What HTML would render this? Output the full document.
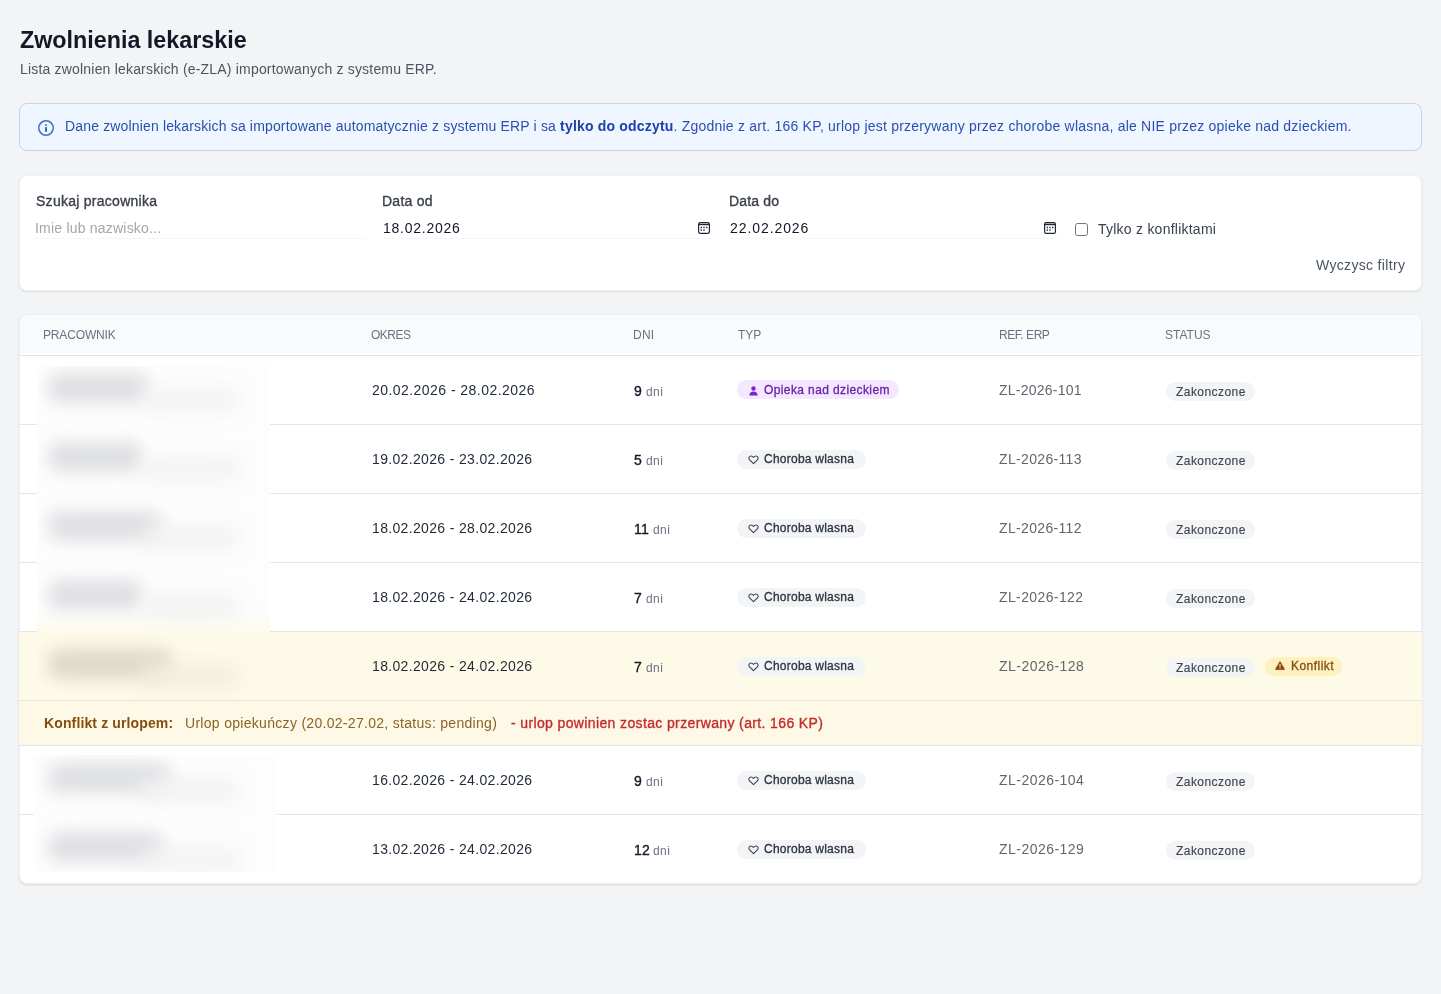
<!DOCTYPE html>
<html><head><meta charset="utf-8"><title>Zwolnienia lekarskie</title>
<style>
html,body{margin:0;padding:0;}
body{width:1441px;height:994px;overflow:hidden;background:#f3f4f6;position:relative;font-family:"Liberation Sans",sans-serif;}
.t{position:absolute;white-space:nowrap;line-height:1;will-change:transform;}
.t b{font-weight:700;}
.ic{position:absolute;display:block;}
.box{position:absolute;box-sizing:border-box;border-radius:8px;}
.info{background:#eff6ff;border:1px solid #c6d5ea;}
.card{background:#fff;border:1px solid #eef0f2;box-shadow:0 1px 3px rgba(0,0,0,0.07),0 1px 2px rgba(0,0,0,0.04);}
.ln{position:absolute;height:1px;background:#f6f6f7;}
.cb{position:absolute;width:13px;height:13px;box-sizing:border-box;border:1px solid #707274;border-radius:2.5px;background:#fff;}
.rl{position:absolute;left:19px;width:1403px;height:1px;background:#e4e5e7;}
.yb{position:absolute;left:19px;width:1403px;background:#fefae8;}
.bd{position:absolute;height:19px;border-radius:10px;}
.blur{position:absolute;overflow:hidden;}
.b1{position:absolute;filter:blur(8px);border-radius:12px;}
.b2{position:absolute;filter:blur(9px);border-radius:12px;}
</style></head><body>
<div class="t" style="left:19.5px;top:29.28px;font-size:23.3px;color:#111827;font-weight:700;letter-spacing:0px;">Zwolnienia lekarskie</div>
<div class="t" style="left:20px;top:62.05px;font-size:14px;color:#4b5563;font-weight:400;letter-spacing:0.19px;">Lista zwolnien lekarskich (e-ZLA) importowanych z systemu ERP.</div>
<div class="box info" style="left:19px;top:103px;width:1403px;height:48px;"></div>
<svg class="ic" style="left:37px;top:119px" width="18" height="18" viewBox="0 0 18 18"><circle cx="9" cy="9" r="7.25" fill="none" stroke="#3d6fcc" stroke-width="1.5"/><rect x="8.1" y="7.9" width="1.8" height="5" rx=".6" fill="#30579f"/><rect x="8.1" y="5.2" width="1.8" height="1.5" rx=".5" fill="#30579f"/></svg>
<div class="t" style="left:64.5px;top:118.75px;font-size:14px;color:#2b4fb0;font-weight:400;letter-spacing:0.19px;"><span style="letter-spacing:0.155px">Dane zwolnien lekarskich sa importowane automatycznie z systemu ERP i sa </span><b style="color:#1e40af">tylko do odczytu</b><span style="letter-spacing:0.215px">. Zgodnie z art. 166 KP, urlop jest przerywany przez chorobe wlasna, ale NIE przez opieke nad dzieckiem.</span></div>
<div class="box card" style="left:19px;top:175px;width:1403px;height:116px;"></div>
<div class="t" style="left:36px;top:193.95px;font-size:14px;color:#3b4049;font-weight:400;letter-spacing:0.27px;-webkit-text-stroke:0.35px #3b4049;">Szukaj pracownika</div>
<div class="t" style="left:35.2px;top:220.65px;font-size:14px;color:#a3a6ab;font-weight:400;letter-spacing:0.21px;">Imie lub nazwisko...</div>
<div class="ln" style="left:36px;top:238px;width:330px;"></div>
<div class="t" style="left:382px;top:194.05px;font-size:14px;color:#3b4049;font-weight:400;letter-spacing:0.25px;-webkit-text-stroke:0.35px #3b4049;">Data od</div>
<div class="t" style="left:382.5px;top:220.95px;font-size:14px;color:#111827;font-weight:400;letter-spacing:0.75px;">18.02.2026</div>
<div class="ln" style="left:383px;top:238px;width:330px;"></div>
<div class="t" style="left:728.5px;top:194.05px;font-size:14px;color:#3b4049;font-weight:400;letter-spacing:0.17px;-webkit-text-stroke:0.35px #3b4049;">Data do</div>
<div class="t" style="left:730px;top:220.95px;font-size:14px;color:#111827;font-weight:400;letter-spacing:0.92px;">22.02.2026</div>
<div class="ln" style="left:730px;top:238px;width:330px;"></div>
<svg class="ic" style="left:698px;top:222px" width="12" height="12" viewBox="0 0 12 12"><rect x="0.6" y="0.6" width="10.8" height="10.8" rx="1.6" fill="none" stroke="#1f2937" stroke-width="1.2"/><rect x="0.6" y="1.8" width="10.8" height="1.4" fill="#1f2937"/><rect x="2.6" y="4.8" width="1.4" height="1.4" fill="#1f2937"/><rect x="5.3" y="4.8" width="1.4" height="1.4" fill="#1f2937"/><rect x="8" y="4.8" width="1.4" height="1.4" fill="#1f2937"/><rect x="2.6" y="7.4" width="1.4" height="1.4" fill="#1f2937"/><rect x="5.3" y="7.4" width="1.4" height="1.4" fill="#1f2937"/></svg>
<svg class="ic" style="left:1044px;top:222px" width="12" height="12" viewBox="0 0 12 12"><rect x="0.6" y="0.6" width="10.8" height="10.8" rx="1.6" fill="none" stroke="#1f2937" stroke-width="1.2"/><rect x="0.6" y="1.8" width="10.8" height="1.4" fill="#1f2937"/><rect x="2.6" y="4.8" width="1.4" height="1.4" fill="#1f2937"/><rect x="5.3" y="4.8" width="1.4" height="1.4" fill="#1f2937"/><rect x="8" y="4.8" width="1.4" height="1.4" fill="#1f2937"/><rect x="2.6" y="7.4" width="1.4" height="1.4" fill="#1f2937"/><rect x="5.3" y="7.4" width="1.4" height="1.4" fill="#1f2937"/></svg>
<div class="cb" style="left:1075px;top:223px;"></div>
<div class="t" style="left:1098px;top:221.75px;font-size:14px;color:#374151;font-weight:400;letter-spacing:0.24px;">Tylko z konfliktami</div>
<div class="t" style="left:1316px;top:258.05px;font-size:14px;color:#4b5563;font-weight:400;letter-spacing:0.33px;">Wyczysc filtry</div>
<div class="box card" style="left:19px;top:314px;width:1403px;height:570px;overflow:hidden"><div style="position:absolute;left:0;top:0;width:1403px;height:38px;background:#f9fafb"></div></div>
<div class="t" style="left:43.2px;top:328.59px;font-size:12px;color:#6b7280;font-weight:400;letter-spacing:-0.15px;">PRACOWNIK</div>
<div class="t" style="left:371.4px;top:328.59px;font-size:12px;color:#6b7280;font-weight:400;letter-spacing:-0.5px;">OKRES</div>
<div class="t" style="left:632.6px;top:328.59px;font-size:12px;color:#6b7280;font-weight:400;letter-spacing:0.25px;">DNI</div>
<div class="t" style="left:738px;top:328.59px;font-size:12px;color:#6b7280;font-weight:400;letter-spacing:0px;">TYP</div>
<div class="t" style="left:998.6px;top:328.59px;font-size:12px;color:#6b7280;font-weight:400;letter-spacing:-0.45px;">REF. ERP</div>
<div class="t" style="left:1165px;top:328.59px;font-size:12px;color:#6b7280;font-weight:400;letter-spacing:0px;">STATUS</div>
<div class="rl" style="top:355px"></div>
<div class="t" style="left:371.7px;top:382.75px;font-size:14px;color:#1f2937;font-weight:400;letter-spacing:0.45px;">20.02.2026 - 28.02.2026</div>
<div class="t" style="left:633.5px;top:383.95px;font-size:14px;color:#111827;font-weight:400;letter-spacing:0.3px;-webkit-text-stroke:0.35px #111827;">9</div>
<div class="t" style="left:646.0px;top:385.64px;font-size:12px;color:#6b7280;font-weight:400;letter-spacing:0.4px;">dni</div>
<div class="bd" style="left:737px;top:380px;width:162px;background:#f3e8ff"></div>
<svg class="ic" style="left:748.5px;top:385.5px" width="9" height="10" viewBox="0 0 9 10"><circle cx="4.5" cy="2.5" r="2.2" fill="#7e22ce"/><path d="M0.3 9.6 C0.5 6.6 2.3 5.6 4.5 5.6 C6.7 5.6 8.5 6.6 8.7 9.6 Z" fill="#7e22ce"/></svg>
<div class="t" style="left:764.2px;top:384.04px;font-size:12px;color:#6b21a8;font-weight:400;letter-spacing:0.39px;-webkit-text-stroke:0.3px #6b21a8;">Opieka nad dzieckiem</div>
<div class="t" style="left:999.2px;top:382.95px;font-size:14px;color:#62666e;font-weight:400;letter-spacing:0.24px;">ZL-2026-101</div>
<div class="bd" style="left:1166px;top:382px;width:89px;background:#f3f4f6"></div>
<div class="t" style="left:1176px;top:385.94px;font-size:12px;color:#3f4652;font-weight:400;letter-spacing:0.44px;-webkit-text-stroke:0.15px #3f4652;">Zakonczone</div>
<div class="rl" style="top:424px"></div>
<div class="t" style="left:371.7px;top:451.75px;font-size:14px;color:#1f2937;font-weight:400;letter-spacing:0.34px;">19.02.2026 - 23.02.2026</div>
<div class="t" style="left:633.5px;top:452.95px;font-size:14px;color:#111827;font-weight:400;letter-spacing:0.3px;-webkit-text-stroke:0.35px #111827;">5</div>
<div class="t" style="left:646.0px;top:454.64px;font-size:12px;color:#6b7280;font-weight:400;letter-spacing:0.4px;">dni</div>
<div class="bd" style="left:737px;top:449.5px;width:129px;background:#f3f4f6"></div>
<svg class="ic" style="left:747.5px;top:454.5px" width="11" height="10" viewBox="0 0 11 10"><path d="M5.5 8.6 L1.6 4.8 C0.6 3.8 0.7 2.2 1.8 1.4 C2.8 0.8 4.3 1.0 5.5 2.4 C6.7 1.0 8.2 0.8 9.2 1.4 C10.3 2.2 10.4 3.8 9.4 4.8 Z" fill="none" stroke="#374151" stroke-width="1.1" stroke-linejoin="round"/></svg>
<div class="t" style="left:764.4px;top:452.84px;font-size:12px;color:#2b3340;font-weight:400;letter-spacing:0.24px;-webkit-text-stroke:0.3px #2b3340;">Choroba wlasna</div>
<div class="t" style="left:999.2px;top:451.95px;font-size:14px;color:#62666e;font-weight:400;letter-spacing:0.34px;">ZL-2026-113</div>
<div class="bd" style="left:1166px;top:451px;width:89px;background:#f3f4f6"></div>
<div class="t" style="left:1176px;top:454.94px;font-size:12px;color:#3f4652;font-weight:400;letter-spacing:0.44px;-webkit-text-stroke:0.15px #3f4652;">Zakonczone</div>
<div class="rl" style="top:493px"></div>
<div class="t" style="left:371.7px;top:520.75px;font-size:14px;color:#1f2937;font-weight:400;letter-spacing:0.34px;">18.02.2026 - 28.02.2026</div>
<div class="t" style="left:633.5px;top:521.95px;font-size:14px;color:#111827;font-weight:400;letter-spacing:0.3px;-webkit-text-stroke:0.35px #111827;">11</div>
<div class="t" style="left:652.5px;top:523.64px;font-size:12px;color:#6b7280;font-weight:400;letter-spacing:0.4px;">dni</div>
<div class="bd" style="left:737px;top:518.5px;width:129px;background:#f3f4f6"></div>
<svg class="ic" style="left:747.5px;top:523.5px" width="11" height="10" viewBox="0 0 11 10"><path d="M5.5 8.6 L1.6 4.8 C0.6 3.8 0.7 2.2 1.8 1.4 C2.8 0.8 4.3 1.0 5.5 2.4 C6.7 1.0 8.2 0.8 9.2 1.4 C10.3 2.2 10.4 3.8 9.4 4.8 Z" fill="none" stroke="#374151" stroke-width="1.1" stroke-linejoin="round"/></svg>
<div class="t" style="left:764.4px;top:521.84px;font-size:12px;color:#2b3340;font-weight:400;letter-spacing:0.24px;-webkit-text-stroke:0.3px #2b3340;">Choroba wlasna</div>
<div class="t" style="left:999.2px;top:520.95px;font-size:14px;color:#62666e;font-weight:400;letter-spacing:0.34px;">ZL-2026-112</div>
<div class="bd" style="left:1166px;top:520px;width:89px;background:#f3f4f6"></div>
<div class="t" style="left:1176px;top:523.94px;font-size:12px;color:#3f4652;font-weight:400;letter-spacing:0.44px;-webkit-text-stroke:0.15px #3f4652;">Zakonczone</div>
<div class="rl" style="top:562px"></div>
<div class="t" style="left:371.7px;top:589.75px;font-size:14px;color:#1f2937;font-weight:400;letter-spacing:0.34px;">18.02.2026 - 24.02.2026</div>
<div class="t" style="left:633.5px;top:590.95px;font-size:14px;color:#111827;font-weight:400;letter-spacing:0.3px;-webkit-text-stroke:0.35px #111827;">7</div>
<div class="t" style="left:646.0px;top:592.64px;font-size:12px;color:#6b7280;font-weight:400;letter-spacing:0.4px;">dni</div>
<div class="bd" style="left:737px;top:587.5px;width:129px;background:#f3f4f6"></div>
<svg class="ic" style="left:747.5px;top:592.5px" width="11" height="10" viewBox="0 0 11 10"><path d="M5.5 8.6 L1.6 4.8 C0.6 3.8 0.7 2.2 1.8 1.4 C2.8 0.8 4.3 1.0 5.5 2.4 C6.7 1.0 8.2 0.8 9.2 1.4 C10.3 2.2 10.4 3.8 9.4 4.8 Z" fill="none" stroke="#374151" stroke-width="1.1" stroke-linejoin="round"/></svg>
<div class="t" style="left:764.4px;top:590.84px;font-size:12px;color:#2b3340;font-weight:400;letter-spacing:0.24px;-webkit-text-stroke:0.3px #2b3340;">Choroba wlasna</div>
<div class="t" style="left:999.2px;top:589.95px;font-size:14px;color:#62666e;font-weight:400;letter-spacing:0.39px;">ZL-2026-122</div>
<div class="bd" style="left:1166px;top:589px;width:89px;background:#f3f4f6"></div>
<div class="t" style="left:1176px;top:592.94px;font-size:12px;color:#3f4652;font-weight:400;letter-spacing:0.44px;-webkit-text-stroke:0.15px #3f4652;">Zakonczone</div>
<div class="rl" style="top:631px"></div>
<div class="yb" style="top:632px;height:68px"></div>
<div class="rl" style="top:700px"></div>
<div class="yb" style="top:701px;height:44px;background:#fef9e7"></div>
<div class="t" style="left:371.7px;top:658.75px;font-size:14px;color:#1f2937;font-weight:400;letter-spacing:0.34px;">18.02.2026 - 24.02.2026</div>
<div class="t" style="left:633.5px;top:659.95px;font-size:14px;color:#111827;font-weight:400;letter-spacing:0.3px;-webkit-text-stroke:0.35px #111827;">7</div>
<div class="t" style="left:646.0px;top:661.64px;font-size:12px;color:#6b7280;font-weight:400;letter-spacing:0.4px;">dni</div>
<div class="bd" style="left:737px;top:656.5px;width:129px;background:#f3f4f6"></div>
<svg class="ic" style="left:747.5px;top:661.5px" width="11" height="10" viewBox="0 0 11 10"><path d="M5.5 8.6 L1.6 4.8 C0.6 3.8 0.7 2.2 1.8 1.4 C2.8 0.8 4.3 1.0 5.5 2.4 C6.7 1.0 8.2 0.8 9.2 1.4 C10.3 2.2 10.4 3.8 9.4 4.8 Z" fill="none" stroke="#374151" stroke-width="1.1" stroke-linejoin="round"/></svg>
<div class="t" style="left:764.4px;top:659.84px;font-size:12px;color:#2b3340;font-weight:400;letter-spacing:0.24px;-webkit-text-stroke:0.3px #2b3340;">Choroba wlasna</div>
<div class="t" style="left:999.2px;top:658.95px;font-size:14px;color:#62666e;font-weight:400;letter-spacing:0.47px;">ZL-2026-128</div>
<div class="bd" style="left:1166px;top:658px;width:89px;background:#f3f4f6"></div>
<div class="t" style="left:1176px;top:661.94px;font-size:12px;color:#3f4652;font-weight:400;letter-spacing:0.44px;-webkit-text-stroke:0.15px #3f4652;">Zakonczone</div>
<div class="bd" style="left:1265px;top:656.5px;width:77px;background:#fdf1c0"></div>
<svg class="ic" style="left:1275px;top:661px" width="10" height="9" viewBox="0 0 10 9"><path d="M5 0.6 L9.5 8.4 L0.5 8.4 Z" fill="#92400e" stroke="#92400e" stroke-width="0.8" stroke-linejoin="round"/><rect x="4.4" y="3.2" width="1.2" height="2.6" fill="#fef3c7"/><rect x="4.4" y="6.5" width="1.2" height="1.1" fill="#fef3c7"/></svg>
<div class="t" style="left:1290.7px;top:659.64px;font-size:12px;color:#854d0e;font-weight:400;letter-spacing:0.47px;-webkit-text-stroke:0.3px #854d0e;">Konflikt</div>
<div class="t" style="left:44px;top:716.05px;font-size:14px;color:#854d0e;font-weight:700;letter-spacing:0.13px;">Konflikt z urlopem:</div>
<div class="t" style="left:185.4px;top:716.05px;font-size:14px;color:#8a6424;font-weight:400;letter-spacing:0.3px;">Urlop opiekuńczy (20.02-27.02, status: pending)</div>
<div class="t" style="left:510.5px;top:716.05px;font-size:14px;color:#c42b2b;font-weight:400;letter-spacing:0.37px;-webkit-text-stroke:0.35px #c42b2b;">- urlop powinien zostac przerwany (art. 166 KP)</div>
<div class="rl" style="top:745px"></div>
<div class="t" style="left:371.7px;top:772.75px;font-size:14px;color:#1f2937;font-weight:400;letter-spacing:0.34px;">16.02.2026 - 24.02.2026</div>
<div class="t" style="left:633.5px;top:773.95px;font-size:14px;color:#111827;font-weight:400;letter-spacing:0.3px;-webkit-text-stroke:0.35px #111827;">9</div>
<div class="t" style="left:646.0px;top:775.64px;font-size:12px;color:#6b7280;font-weight:400;letter-spacing:0.4px;">dni</div>
<div class="bd" style="left:737px;top:770.5px;width:129px;background:#f3f4f6"></div>
<svg class="ic" style="left:747.5px;top:775.5px" width="11" height="10" viewBox="0 0 11 10"><path d="M5.5 8.6 L1.6 4.8 C0.6 3.8 0.7 2.2 1.8 1.4 C2.8 0.8 4.3 1.0 5.5 2.4 C6.7 1.0 8.2 0.8 9.2 1.4 C10.3 2.2 10.4 3.8 9.4 4.8 Z" fill="none" stroke="#374151" stroke-width="1.1" stroke-linejoin="round"/></svg>
<div class="t" style="left:764.4px;top:773.84px;font-size:12px;color:#2b3340;font-weight:400;letter-spacing:0.24px;-webkit-text-stroke:0.3px #2b3340;">Choroba wlasna</div>
<div class="t" style="left:999.2px;top:772.95px;font-size:14px;color:#62666e;font-weight:400;letter-spacing:0.47px;">ZL-2026-104</div>
<div class="bd" style="left:1166px;top:772px;width:89px;background:#f3f4f6"></div>
<div class="t" style="left:1176px;top:775.94px;font-size:12px;color:#3f4652;font-weight:400;letter-spacing:0.44px;-webkit-text-stroke:0.15px #3f4652;">Zakonczone</div>
<div class="rl" style="top:814px"></div>
<div class="t" style="left:371.7px;top:841.75px;font-size:14px;color:#1f2937;font-weight:400;letter-spacing:0.34px;">13.02.2026 - 24.02.2026</div>
<div class="t" style="left:633.5px;top:842.95px;font-size:14px;color:#111827;font-weight:400;letter-spacing:0.3px;-webkit-text-stroke:0.35px #111827;">12</div>
<div class="t" style="left:652.5px;top:844.64px;font-size:12px;color:#6b7280;font-weight:400;letter-spacing:0.4px;">dni</div>
<div class="bd" style="left:737px;top:839.5px;width:129px;background:#f3f4f6"></div>
<svg class="ic" style="left:747.5px;top:844.5px" width="11" height="10" viewBox="0 0 11 10"><path d="M5.5 8.6 L1.6 4.8 C0.6 3.8 0.7 2.2 1.8 1.4 C2.8 0.8 4.3 1.0 5.5 2.4 C6.7 1.0 8.2 0.8 9.2 1.4 C10.3 2.2 10.4 3.8 9.4 4.8 Z" fill="none" stroke="#374151" stroke-width="1.1" stroke-linejoin="round"/></svg>
<div class="t" style="left:764.4px;top:842.84px;font-size:12px;color:#2b3340;font-weight:400;letter-spacing:0.24px;-webkit-text-stroke:0.3px #2b3340;">Choroba wlasna</div>
<div class="t" style="left:999.2px;top:841.95px;font-size:14px;color:#62666e;font-weight:400;letter-spacing:0.47px;">ZL-2026-129</div>
<div class="bd" style="left:1166px;top:841px;width:89px;background:#f3f4f6"></div>
<div class="t" style="left:1176px;top:844.94px;font-size:12px;color:#3f4652;font-weight:400;letter-spacing:0.44px;-webkit-text-stroke:0.15px #3f4652;">Zakonczone</div>
<div class="blur" style="left:37px;top:366px;width:233px;height:333px;background:#fdfdfd"><div style="position:absolute;left:-30px;top:258px;width:293px;height:88px;background:#fefae8;filter:blur(8px)"></div><div class="b1" style="left:11px;top:7px;width:100px;height:30px;background:#dfe0e3"></div><div class="b2" style="left:103px;top:23px;width:100px;height:22px;background:#f2f2f3"></div><div class="b1" style="left:11px;top:76px;width:94px;height:30px;background:#dfe0e3"></div><div class="b2" style="left:103px;top:92px;width:100px;height:22px;background:#f2f2f3"></div><div class="b1" style="left:11px;top:145px;width:113px;height:30px;background:#dfe0e3"></div><div class="b2" style="left:103px;top:161px;width:100px;height:22px;background:#f2f2f3"></div><div class="b1" style="left:11px;top:214px;width:94px;height:30px;background:#dfe0e3"></div><div class="b2" style="left:103px;top:230px;width:100px;height:22px;background:#f2f2f3"></div><div class="b1" style="left:11px;top:283px;width:124px;height:30px;background:#dddac8"></div><div class="b2" style="left:103px;top:299px;width:100px;height:22px;background:#f1eedd"></div></div>
<div class="blur" style="left:34px;top:755px;width:243px;height:117px;background:#fdfdfd"><div class="b1" style="left:14px;top:8px;width:122px;height:30px;background:#dfe0e3"></div><div class="b2" style="left:106px;top:24px;width:100px;height:22px;background:#f2f2f3"></div><div class="b1" style="left:14px;top:77px;width:115px;height:30px;background:#dfe0e3"></div><div class="b2" style="left:106px;top:93px;width:100px;height:22px;background:#f2f2f3"></div></div>
</body></html>
